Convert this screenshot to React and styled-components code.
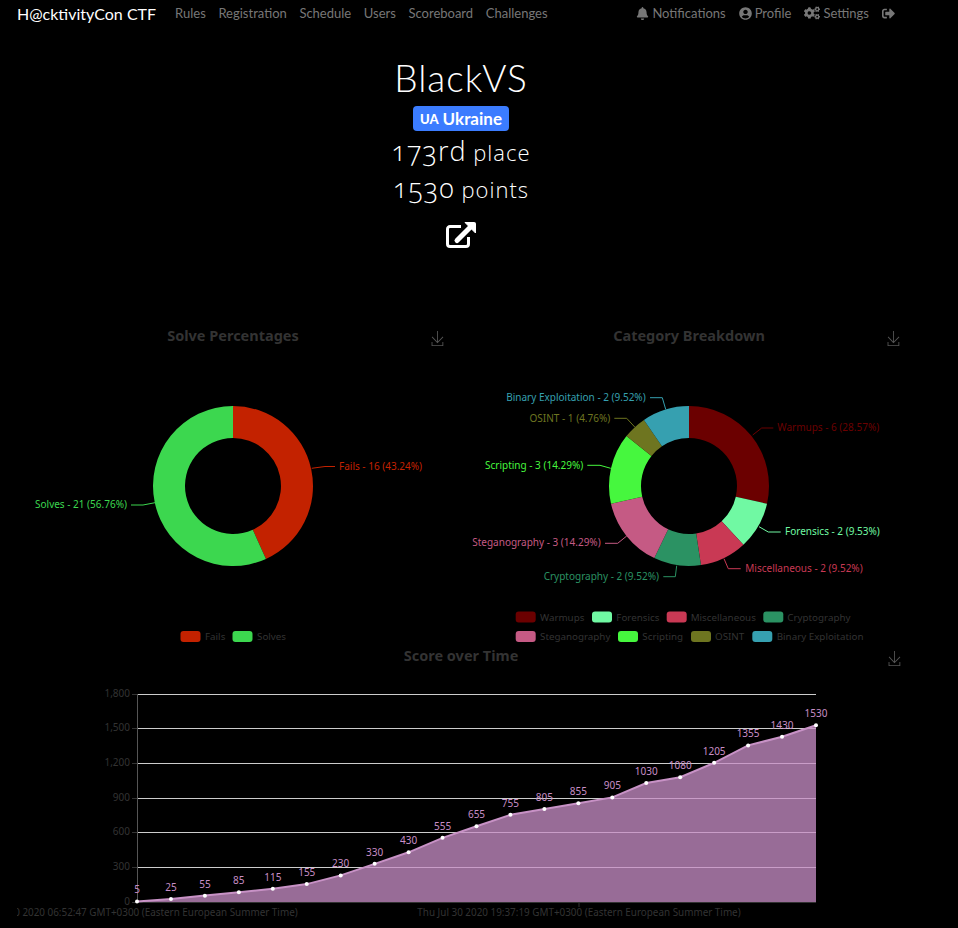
import React from 'react';
import styled, { createGlobalStyle } from 'styled-components';
import { FaBell, FaUserCircle, FaCogs, FaSignOutAlt } from 'react-icons/fa';

const Global = createGlobalStyle`
  html, body { margin: 0; padding: 0; background: #000; height: 928px; overflow: hidden; }
  body { font-family: "Lato", "Liberation Sans", sans-serif; color: #fff; }
`;
const Nav = styled.nav`
  display: flex; align-items: center; height: 26px; padding: 0 63px 0 17px; box-sizing: border-box;
`;
const Brand = styled.a`font-size: 16px; color: #fff; margin-right: 19px; white-space: nowrap;`;
const NavList = styled.div`display: flex; gap: ${p => p.$gap || 13}px; align-items: center;`;
const Spacer = styled.div`flex: 1;`;
const NavLink = styled.a`
  display: inline-flex; align-items: center; gap: 3px; font-size: 13px; color: #777; white-space: nowrap;
  svg { display: block; }
`;
const Hero = styled.header`
  display: flex; flex-direction: column; align-items: center; width: 912px; margin-left: 5px; padding-top: 27px;
`;
const Name = styled.h1`margin: 0; font-family: "Lato", sans-serif; font-weight: 300; font-size: 37px; line-height: 50px; letter-spacing: 1px; color: #fff;`;
const Badge = styled.span`
  display: inline-flex; align-items: center; gap: 4px; height: 25px; padding: 0 7px; margin-top: 3px; border-radius: 4px;
  background: #3b7cff; color: #fff; font-weight: 700; font-size: 17px;
`;
const Flag = styled.span`font-size: 13px; font-weight: 900; letter-spacing: 0;`;
const Stat = styled.div`
  font-family: "Open Sans", sans-serif; font-weight: 300; font-size: 22px; line-height: 35px; letter-spacing: 1px; color: #fff;
  font-variant-numeric: oldstyle-nums;
  &:first-of-type { margin-top: 2px; }
`;
const Big = styled.span`font-size: 27px;`;
const Share = styled.a`display: block; margin-top: 15px; color: #fff; height: 26px; svg { display: block; }`;
const Row = styled.section`
  display: grid; grid-template-columns: 456px 456px; margin: 75px 0 0 5px;
`;
const Panel = styled.div`display: flex; flex-direction: column; position: relative; ${p => p.$wide && 'width: 912px; margin-left: 5px;'}`;
const TitleBar = styled.div`
  height: ${p => p.$h || 26}px; line-height: 25px; text-align: center; font-family: "Noto Sans", sans-serif; font-weight: 700; font-size: 14.5px; color: #333;
`;
const Save = styled.svg`
  position: absolute; right: ${p => p.$right || 17}px; top: 8px; width: 13px; height: 15px; fill: none; stroke: #555; stroke-width: 4;
`;
const Chart = styled.svg`display: block; ${p => p.$offset && `margin-left: ${p.$offset}px;`}`;
const ChartText = styled.text`font-family: "Noto Sans", sans-serif; font-size: ${p => p.$size || 10}px;`;

const SAVE_PATH = 'M4.7,22.9L29.3,45.5L54.7,23.4M4.6,43.6L4.6,58L53.8,58L53.8,43.6M29.2,45.1L29.2,0';
const SaveIcon = ({ right }) => (
  <Save $right={right} viewBox="0 0 59 59" preserveAspectRatio="none"><path d={SAVE_PATH} /></Save>
);
const ShareIcon = () => (
  <svg width="30" height="26" viewBox="0 0 30 26">
    <path d="M15 4.5H4a2.5 2.5 0 0 0-2.5 2.5V22a2.5 2.5 0 0 0 2.5 2.5H20a2.5 2.5 0 0 0 2.5-2.5V15" fill="none" stroke="currentColor" strokeWidth="3" />
    <path d="M11 18.5L24 5.5" fill="none" stroke="currentColor" strokeWidth="5" strokeLinecap="round" />
    <path d="M19 .5H28.5A1 1 0 0 1 29.5 1.5V11Z" fill="currentColor" stroke="currentColor" strokeLinejoin="round" />
  </svg>
);

function arc(cx, cy, R, r, a0, a1) {
  const p = (rad, a) => [cx + rad * Math.sin(a), cy - rad * Math.cos(a)].map(n => n.toFixed(2)).join(' ');
  const large = a1 - a0 > Math.PI ? 1 : 0;
  return `M${p(R, a0)}A${R} ${R} 0 ${large} 1 ${p(R, a1)}L${p(r, a1)}A${r} ${r} 0 ${large} 0 ${p(r, a0)}Z`;
}
function Donut({ cx, cy, data }) {
  let acc = 0;
  return data.map(d => {
    const a0 = acc * 2 * Math.PI / 100;
    acc += d.pct;
    const a1 = acc * 2 * Math.PI / 100;
    return (
      <g key={d.name}>
        <path d={arc(cx, cy, 80, 48, a0, a1)} fill={d.color} />
        <polyline points={d.line} fill="none" stroke={d.color} strokeWidth="1" />
        <ChartText x={d.tx} y={d.ty} fill={d.color} textAnchor={d.anchor}>{d.label}</ChartText>
      </g>
    );
  });
}
const Legend = ({ items }) => items.map(i => (
  <g key={i.name}>
    <rect x={i.x} y={i.y} width="20" height="11" rx="3" fill={i.color} />
    <ChartText $size={9.8} x={i.tx} y={i.y + 9} fill="#333">{i.name}</ChartText>
  </g>
));

const solves = [
  { name: 'Fails', pct: 43.24, color: '#c32200', label: 'Fails - 16 (43.24%)', line: '311.7,468.3 325,466.5 335,466.5', tx: 339, ty: 469.5, anchor: 'start' },
  { name: 'Solves', pct: 56.76, color: '#3cd74f', label: 'Solves - 21 (56.76%)', line: '155,502.7 143,505 131,505', tx: 127, ty: 508, anchor: 'end' },
];
const cats = [
  { name: 'Warmups', pct: 28.57, color: '#6b0000', label: 'Warmups - 6 (28.57%)', line: '752.7,435 761.7,428 773.3,428', tx: 777.3, ty: 431, anchor: 'start' },
  { name: 'Forensics', pct: 9.53, color: '#70f9a3', label: 'Forensics - 2 (9.53%)', line: '759,526.7 768.3,532 780.7,532', tx: 785, ty: 535, anchor: 'start' },
  { name: 'Miscellaneous', pct: 9.52, color: '#c93954', label: 'Miscellaneous - 2 (9.52%)', line: '724,558.7 728.3,568.7 740.7,568.7', tx: 745.3, ty: 571.5, anchor: 'start' },
  { name: 'Cryptography', pct: 9.52, color: '#2b9263', label: 'Cryptography - 2 (9.52%)', line: '676.7,565.7 675.3,576.7 663.3,576.7', tx: 659, ty: 579.5, anchor: 'end' },
  { name: 'Steganography', pct: 14.29, color: '#c55a84', label: 'Steganography - 3 (14.29%)', line: '626.7,536 617.7,543.3 605,543.3', tx: 600.7, ty: 546, anchor: 'end' },
  { name: 'Scripting', pct: 14.29, color: '#46f73e', label: 'Scripting - 3 (14.29%)', line: '610.7,468.3 600,465.3 587.3,465.3', tx: 583.3, ty: 468.5, anchor: 'end' },
  { name: 'OSINT', pct: 4.76, color: '#6e7520', label: 'OSINT - 1 (4.76%)', line: '635,427.3 626.7,418.3 614.3,418.3', tx: 610.3, ty: 421.5, anchor: 'end' },
  { name: 'Binary Exploitation', pct: 9.52, color: '#36a0b0', label: 'Binary Exploitation - 2 (9.52%)', line: '665.7,409.3 662.3,397.7 650,397.7', tx: 645.7, ty: 400.5, anchor: 'end' },
];
const solveLegend = [
  { name: 'Fails', color: '#c32200', x: 180.5, y: 631, tx: 205 },
  { name: 'Solves', color: '#3cd74f', x: 232.5, y: 631, tx: 257 },
];
const catLegend = [
  { name: 'Warmups', x: 515.7, y: 611.5, tx: 540 },
  { name: 'Forensics', x: 592, y: 611.5, tx: 616.3 },
  { name: 'Miscellaneous', x: 666.7, y: 611.5, tx: 690.7 },
  { name: 'Cryptography', x: 763.3, y: 611.5, tx: 787.3 },
  { name: 'Steganography', x: 515.7, y: 631, tx: 540 },
  { name: 'Scripting', x: 618, y: 631, tx: 642.3 },
  { name: 'OSINT', x: 691, y: 631, tx: 715 },
  { name: 'Binary Exploitation', x: 752.3, y: 631, tx: 776.7 },
].map(l => ({ ...l, color: cats.find(c => c.name === l.name).color }));

const values = [5, 25, 55, 85, 115, 155, 230, 330, 430, 555, 655, 755, 805, 855, 905, 1030, 1080, 1205, 1355, 1430, 1530];
const px = i => 137 + i * 33.95;
const py = v => 902 - v / 1800 * 208;
const ticks = [[0, 902.5], [300, 867.5], [600, 832.5], [900, 798.5], [1200, 763.5], [1500, 728.5], [1800, 694.5]];
const linePts = values.map((v, i) => `${px(i).toFixed(1)},${py(v).toFixed(1)}`).join(' ');
const date = t => `Thu Jul 30 2020 ${t} GMT+0300 (Eastern European Summer Time)`;

function ScoreChart() {
  return (
    <Chart $offset={12} width="888" height="258" viewBox="17 670 888 258">
      {ticks.slice(1).map(([v, y]) => <line key={v} x1="137" x2="816" y1={y} y2={y} stroke="#ccc" />)}
      <line x1="137.5" x2="137.5" y1="694" y2="902" stroke="#555" />
      <line x1="137" x2="816" y1="902.5" y2="902.5" stroke="#333" />
      {ticks.map(([v, y]) => (
        <g key={v}>
          <line x1="132" x2="137" y1={y} y2={y} stroke="#333" />
          <ChartText x="130" y={y + 2.5} fill="#333" textAnchor="end">{v.toLocaleString('en-US')}</ChartText>
        </g>
      ))}
      <polygon points={`137,902 ${linePts} 816,902`} fill="#c88ec6" fillOpacity="0.76" />
      <polyline points={linePts} fill="none" stroke="#c892c6" strokeWidth="2" />
      {values.map((v, i) => (
        <g key={i}>
          <circle cx={px(i)} cy={py(v)} r="2" fill="#fff" />
          <ChartText x={px(i)} y={py(v) - 8} fill="#c88ec6" textAnchor="middle">{v}</ChartText>
        </g>
      ))}
      <line x1="579" x2="579" y1="902" y2="907" stroke="#333" />
      <ChartText $size={9.9} x="136" y="916" fill="#333" textAnchor="middle">{date('06:52:47')}</ChartText>
      <ChartText $size={9.9} x="579" y="916" fill="#333" textAnchor="middle">{date('19:37:19')}</ChartText>
    </Chart>
  );
}

export default function App() {
  return (
    <>
      <Global />
      <Nav>
        <Brand>H@cktivityCon CTF</Brand>
        <NavList $gap={12.6}>
          {['Rules', 'Registration', 'Schedule', 'Users', 'Scoreboard', 'Challenges'].map(l => <NavLink key={l}>{l}</NavLink>)}
        </NavList>
        <Spacer />
        <NavList>
          <NavLink><FaBell size={13} />Notifications</NavLink>
          <NavLink><FaUserCircle size={13} />Profile</NavLink>
          <NavLink><FaCogs size={16} />Settings</NavLink>
          <NavLink><FaSignOutAlt size={13} /></NavLink>
        </NavList>
      </Nav>
      <Hero>
        <Name>BlackVS</Name>
        <Badge><Flag>UA</Flag>Ukraine</Badge>
        <Stat><Big>173rd</Big> place</Stat>
        <Stat><Big>1530</Big> points</Stat>
        <Share><ShareIcon /></Share>
      </Hero>
      <Row>
        <Panel>
          <TitleBar>Solve Percentages</TitleBar>
          <SaveIcon />
          <Chart width="456" height="294" viewBox="5 349 456 294">
            <Donut cx={233} cy={486} data={solves} />
            <Legend items={solveLegend} />
          </Chart>
        </Panel>
        <Panel>
          <TitleBar>Category Breakdown</TitleBar>
          <SaveIcon />
          <Chart width="456" height="294" viewBox="461 349 456 294">
            <Donut cx={689} cy={486} data={cats} />
            <Legend items={catLegend} />
          </Chart>
        </Panel>
      </Row>
      <Panel $wide>
        <TitleBar $h={27}>Score over Time</TitleBar>
        <SaveIcon right={16} />
        <ScoreChart />
      </Panel>
    </>
  );
}
